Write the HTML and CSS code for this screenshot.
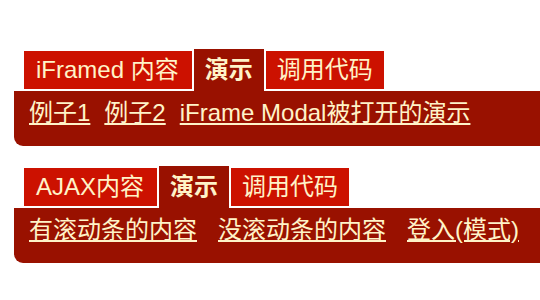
FILE: index.html
```html
<!DOCTYPE html>
<html>
<head>
<meta charset="utf-8">
<link rel="stylesheet" href="styles.css">
</head>
<body>
<div class="tabset first">
  <ul class="tabs">
    <li class="tab mixed">iFramed 内容</li>
    <li class="tab active">演示</li>
    <li class="tab">调用代码</li>
  </ul>
  <div class="panel gap-s">
    <a href="#">例子1</a>
    <a href="#">例子2</a>
    <a href="#">iFrame Modal被打开的演示</a>
  </div>
</div>
<div class="tabset">
  <ul class="tabs">
    <li class="tab mixed">AJAX内容</li>
    <li class="tab active">演示</li>
    <li class="tab">调用代码</li>
  </ul>
  <div class="panel gap-l">
    <a href="#">有滚动条的内容</a>
    <a href="#">没滚动条的内容</a>
    <a href="#">登入(模式)</a>
  </div>
</div>
</body>
</html>
```
FILE: styles.css
```css
html, body {
  margin: 0;
  padding: 0;
  background: #ffffff;
  overflow: hidden;
}
body {
  font-family: "Liberation Sans", "Noto Sans CJK SC", sans-serif;
  font-size: 24px;
  color: #fff3c8;
}
.tabset {
  margin-left: 14px;
  margin-top: 20px;
}
.tabset.first {
  margin-top: 49px;
}
.tabs {
  list-style: none;
  margin: 0;
  padding: 0 0 0 10px;
  display: flex;
  align-items: flex-start;
  gap: 2px;
}
.tab {
  margin-top: 2px;
  height: 38px;
  line-height: 38px;
  padding: 0 11px;
  background: #cc1100;
  white-space: nowrap;
}
.tab.mixed {
  padding: 0 13px 0 12px;
}
.tab.active {
  margin-top: 0;
  height: 40px;
  padding-top: 2px;
  background: #991100;
  font-weight: bold;
}
.panel {
  background: #991100;
  border-radius: 0 0 0 9px;
  height: 55px;
  box-sizing: border-box;
  padding: 8px 15px 0 15px;
  line-height: 27px;
  display: flex;
  white-space: nowrap;
}
.panel a {
  color: #fff3c8;
  text-decoration: underline;
}
.gap-s { gap: 14px; }
.gap-l { gap: 21px; }
```
